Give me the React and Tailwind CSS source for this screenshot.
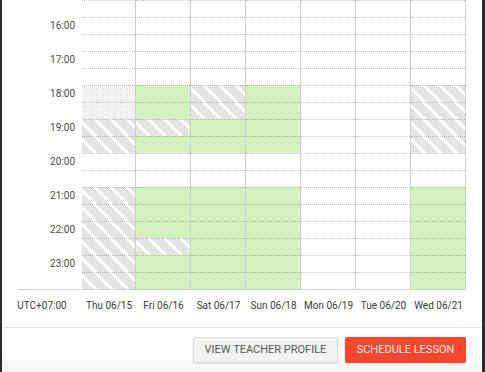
import React from "react";

const rows = ["15:30","16:00","16:30","17:00","17:30","18:00","18:30","19:00","19:30","20:00","20:30","21:00","21:30","22:00","22:30","23:00","23:30"];

const days = [
  { label: "Thu 06/15", w: "w-[54px]", s: ".....ddhh..hhhhhh" },
  { label: "Fri 06/16", w: "w-[55px]", s: ".....gghg..ggghgg" },
  { label: "Sat 06/17", w: "w-[55px]", s: ".....hhgg..gggggg" },
  { label: "Sun 06/18", w: "w-[55px]", s: ".....gggg..gggggg" },
  { label: "Mon 06/19", w: "w-[55px]", s: "................." },
  { label: "Tue 06/20", w: "w-[55px]", s: "................." },
  { label: "Wed 06/21", w: "w-[55px]", s: ".....hhhh..gggggg" },
];

function cellClass(c) {
  if (c === "g") return "bg-[#d3f2c0]";
  if (c === "h") return "bg-[repeating-linear-gradient(45deg,#e4e4e4_0px,#e4e4e4_8px,#ffffff_8px,#ffffff_11.3px)]";
  if (c === "d") return "bg-[#f3f3f3] bg-[radial-gradient(#dcdcdc_0.6px,transparent_0.8px)] bg-[length:6px_6px]";
  return "bg-white";
}

export default function App() {
  return (
    <div className="w-[485px] h-[372px] bg-[#2b2b2b] flex overflow-hidden" style={{ fontFamily: "Roboto, 'Liberation Sans', sans-serif" }}>
      <div className="ml-[2px] w-[480px] h-full bg-white flex flex-col">
        <div className="flex">
          <div className="w-[80px] flex flex-col">
            {rows.map((r, i) => (
              <div key={r} className="h-[17px] text-right pr-[7px] text-[10px] leading-[17px] text-[#4a4a4a]">
                {i % 2 === 1 ? r : ""}
              </div>
            ))}
          </div>
          {days.map((d) => (
            <div key={d.label} className={`${d.w} flex flex-col border-r border-[rgba(0,0,0,0.2)]`}>
              {d.s.split("").map((c, i) => (
                <div key={i} className={`h-[17px] border-t border-dotted border-[rgba(0,0,0,0.22)] ${cellClass(c)}`} />
              ))}
            </div>
          ))}
        </div>
        <div className="ml-[16px] w-[448px] h-px bg-[#cccccc]" />
        <div className="flex h-[37px] text-[10px] leading-[12px] text-[#3a3a3a]">
          <div className="w-[80px] text-center pt-[10px]">UTC+07:00</div>
          {days.map((d) => (
            <div key={d.label} className={`${d.w} text-center pt-[10px] whitespace-nowrap`}>{d.label}</div>
          ))}
        </div>
        <div className="flex-1 border-t border-[#e6e6e6] flex justify-end items-start pt-[9px] pr-[16px] gap-[7px] bg-[linear-gradient(to_bottom,#ffffff_55%,#f4f4f4)]">
          <button className="w-[145px] h-[26px] bg-[#f2f2f2] border border-[#d9d9d9] rounded-[2px] shadow-[0_1px_2px_rgba(0,0,0,0.12)] text-[11px] text-[#555] uppercase tracking-normal">
            View Teacher Profile
          </button>
          <button className="w-[121px] h-[26px] bg-[#f6462e] rounded-[2px] shadow-[0_1px_2px_rgba(0,0,0,0.15)] text-[11px] text-[#ffeeea] uppercase">
            Schedule Lesson
          </button>
        </div>
      </div>
    </div>
  );
}
